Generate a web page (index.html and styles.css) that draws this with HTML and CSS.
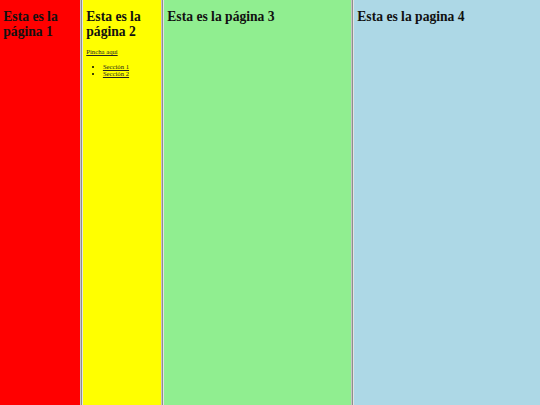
FILE: index.html
```html
<!DOCTYPE html>
<html lang="es">
<head>
<meta charset="utf-8">
<title>Marcos</title>
<link rel="stylesheet" href="styles.css">
</head>
<body>
<div class="frameset">
  <section class="frame f1">
    <h1>Esta es la página 1</h1>
  </section>
  <div class="divider"></div>
  <section class="frame f2">
    <h1>Esta es la página 2</h1>
    <p><a href="#">Pincha aquí</a></p>
    <ul>
      <li><a href="#">Sección 1</a></li>
      <li><a href="#">Sección 2</a></li>
    </ul>
  </section>
  <div class="divider"></div>
  <section class="frame f3">
    <h1>Esta es la página 3</h1>
  </section>
  <div class="divider"></div>
  <section class="frame f4">
    <h1>Esta es la pagina 4</h1>
  </section>
</div>
</body>
</html>
```
FILE: styles.css
```css
html, body {
  margin: 0;
  padding: 0;
  height: 100%;
}
body {
  font-family: "Liberation Serif", "Times New Roman", serif;
  color: #000;
}
.frameset {
  display: flex;
  width: 540px;
  height: 405px;
  overflow: hidden;
}
.frame {
  padding: 3.3px;
  box-sizing: border-box;
  height: 100%;
  overflow: hidden;
  flex: none;
}
.f1 { width: 80px; background: #ff0000; }
.f2 { width: 78px; background: #ffff00; }
.f3 { width: 187px; background: #90ee90; }
.f4 { flex: 1 1 auto; background: #add8e6; }
.divider {
  flex: none;
  width: 1px;
  background: #8e8e8e;
  border-left: 1px solid #c8c4c4;
  border-right: 1px solid #e2e2e2;
}
h1 {
  font-size: 13.6px;
  line-height: 15.3px;
  font-weight: bold;
  color: #111;
  margin: 5.6px 0 9px;
}
p {
  font-size: 6.7px;
  line-height: 7.7px;
  margin: 0 0 6.6px;
}
ul {
  font-size: 6.7px;
  line-height: 7.7px;
  margin: 0;
  padding-left: 16.6px;
}
a {
  color: #222;
  text-decoration: underline;
}
```
